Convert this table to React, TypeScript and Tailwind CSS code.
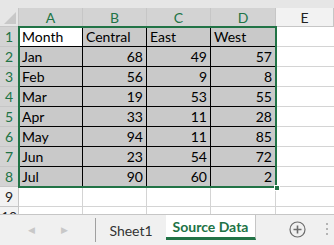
import React from "react";

const cols = ["A", "B", "C", "D", "E"];
const rows: [string, number, number, number][] = [
  ["Jan", 68, 49, 57],
  ["Feb", 56, 9, 8],
  ["Mar", 19, 53, 55],
  ["Apr", 33, 11, 28],
  ["May", 94, 11, 85],
  ["Jun", 23, 54, 72],
  ["Jul", 90, 60, 2],
];

const font = { fontFamily: "Lato, 'Open Sans', sans-serif" };

function RowHead({ n, sel }: { n: number; sel: boolean }) {
  return (
    <div
      className={`h-[20px] flex items-center justify-center text-[14px] border-b border-r border-[#c6c6c6] ${
        sel ? "bg-[#d3d3d3] text-[#217346]" : "bg-[#f2f2f2] text-[#222]"
      }`}
    >
      {n}
    </div>
  );
}

function Cell({ children, right, white, last }: { children: React.ReactNode; right?: boolean; white?: boolean; last?: boolean }) {
  return (
    <div
      className={`h-[20px] flex items-center px-[3px] text-[14px] text-black border-b border-r ${
        last ? "border-r-[#d4d4d4]" : "border-r-black"
      } border-b-black ${right ? "justify-end" : "justify-start"} ${white ? "bg-white" : "bg-[#c9c9c9]"}`}
    >
      {children}
    </div>
  );
}

export default function App() {
  return (
    <div className="w-[334px] h-[245px] bg-white overflow-hidden relative" style={font}>
      <div className="h-[8px] bg-[#e6e6e6]" />
      <div className="grid grid-cols-[19px_64px_64px_64px_65px_1fr]">
        {/* corner */}
        <div className="h-[19px] bg-[#e6e6e6] border-r border-b border-[#c6c6c6] relative">
          <svg className="absolute right-[2px] bottom-[2px]" width="12" height="12" viewBox="0 0 12 12">
            <polygon points="12,0 12,12 0,12" fill="#c8c8c8" />
          </svg>
        </div>
        {cols.map((c, i) => (
          <div
            key={c}
            className={`h-[19px] flex items-center justify-center text-[14px] border-r border-b border-[#c6c6c6] ${
              i < 4 ? "bg-[#d3d3d3] text-[#217346]" : "bg-[#f2f2f2] text-[#222]"
            }`}
          >
            {c}
          </div>
        ))}

        <RowHead n={1} sel />
        <Cell white>Month</Cell>
        <Cell>Central</Cell>
        <Cell>East</Cell>
        <Cell last>West</Cell>
        <div className="h-[20px] border-b border-[#d4d4d4]" />

        {rows.map((r, i) => (
          <React.Fragment key={r[0]}>
            <RowHead n={i + 2} sel />
            <Cell>{r[0]}</Cell>
            <Cell right>{r[1]}</Cell>
            <Cell right>{r[2]}</Cell>
            <Cell right last>{r[3]}</Cell>
            <div className="h-[20px] border-b border-[#d4d4d4]" />
          </React.Fragment>
        ))}

        {[9, 10].map((n) => (
          <React.Fragment key={n}>
            <RowHead n={n} sel={false} />
            <div className="h-[20px] border-r border-b border-[#d4d4d4]" />
            <div className="h-[20px] border-r border-b border-[#d4d4d4]" />
            <div className="h-[20px] border-r border-b border-[#d4d4d4]" />
            <div className="h-[20px] border-r border-b border-[#d4d4d4]" />
            <div className="h-[20px] border-b border-[#d4d4d4]" />
          </React.Fragment>
        ))}
      </div>

      {/* selection outline A1:D8 with fill handle */}
      <div className="absolute left-[18px] top-[26px] w-[259px] h-[162px] border-2 border-[#217346] pointer-events-none">
        <div className="absolute right-[-5px] bottom-[-5px] w-[6px] h-[6px] bg-[#217346] border border-white" />
      </div>

      {/* sheet tabs */}
      <div className="absolute left-0 right-0 top-[214px] h-[31px] bg-[#f0f0f0] border-t border-[#c6c6c6] flex items-stretch">
        <div className="w-[95px] shrink-0 flex items-center justify-center gap-[26px] text-[#c8c8c8] text-[9px]">
          <span>◀</span>
          <span>▶</span>
        </div>
        <div className="w-[71px] shrink-0 border-l border-[#a0a0a0] my-[3px] flex items-center justify-center text-[14px] text-[#333]">
          Sheet1
        </div>
        <div className="w-[90px] shrink-0 bg-white border-b-[3px] border-r border-r-[#c6c6c6] border-b-[#217346] mb-[5px] flex items-center justify-center text-[14px] font-bold text-[#217346]">
          Source Data
        </div>
        <div className="pl-[33px] shrink-0 flex items-center pb-[2px]">
          <svg width="17" height="17" viewBox="0 0 17 17">
            <circle cx="8.5" cy="8.5" r="7.5" fill="none" stroke="#6d6d6d" strokeWidth="1.2" />
            <path d="M8.5 4.5v8M4.5 8.5h8" stroke="#6d6d6d" strokeWidth="1.6" />
          </svg>
        </div>
        <div className="ml-[20px] w-[2px] shrink-0 flex flex-col items-center justify-center gap-[3px] pb-[2px]">
          <span className="w-[2px] h-[2px] bg-[#b4b4b4]" />
          <span className="w-[2px] h-[2px] bg-[#b4b4b4]" />
          <span className="w-[2px] h-[2px] bg-[#b4b4b4]" />
        </div>
      </div>
    </div>
  );
}
